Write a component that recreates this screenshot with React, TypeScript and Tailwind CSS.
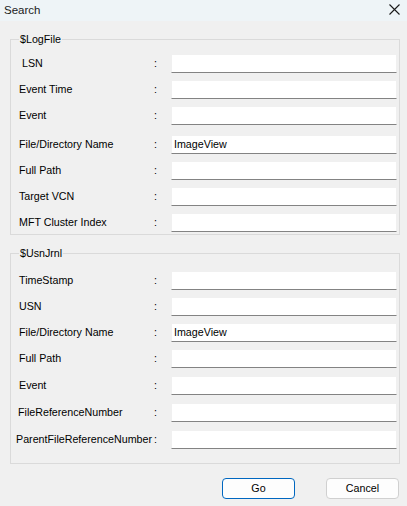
import React from "react";

type Row = { label: string; value?: string; mt: string; labelCls?: string };

const logFileRows: Row[] = [
  { label: "LSN", mt: "mt-0", labelCls: "w-[135px] pl-[3px]" },
  { label: "Event Time", mt: "mt-[7px]" },
  { label: "Event", mt: "mt-[7px]" },
  { label: "File/Directory Name", value: "ImageView", mt: "mt-[10px]" },
  { label: "Full Path", mt: "mt-[7px]" },
  { label: "Target VCN", mt: "mt-[7px]" },
  { label: "MFT Cluster Index", mt: "mt-[7px]" },
];

const usnRows: Row[] = [
  { label: "TimeStamp", mt: "mt-0" },
  { label: "USN", mt: "mt-[7px]" },
  { label: "File/Directory Name", value: "ImageView", mt: "mt-[7px]" },
  { label: "Full Path", mt: "mt-[7px]" },
  { label: "Event", mt: "mt-[8px]" },
  { label: "FileReferenceNumber", mt: "mt-[8px]", labelCls: "w-[136px] -ml-[1px]" },
  { label: "ParentFileReferenceNumber", mt: "mt-[8px]", labelCls: "w-[138px] -ml-[3px]" },
];

const FieldRow: React.FC<{ row: Row }> = ({ row }) => (
  <div className={`flex items-center h-[19px] ${row.mt}`}>
    <div className={`shrink-0 whitespace-nowrap text-[#000] ${row.labelCls ?? "w-[135px]"}`}>
      {row.label}
    </div>
    <div className="w-[17px] shrink-0 text-[#000]">:</div>
    <div className="flex-1 h-[19px] bg-white border border-[#f0f0f0] border-b-[#838383] flex items-center px-[2px] text-black">
      {row.value}
    </div>
  </div>
);

const GroupBox: React.FC<{ title: string; rows: Row[]; className: string; bodyCls: string }> = ({
  title,
  rows,
  className,
  bodyCls,
}) => (
  <fieldset className={`border border-[#dadada] ml-[10px] mr-[7px] pl-[8px] pr-[2px] min-w-0 ${className}`}>
    <legend className="px-[1px] text-black leading-[14px]">{title}</legend>
    <div className={bodyCls}>
      {rows.map((r) => (
        <FieldRow key={r.label} row={r} />
      ))}
    </div>
  </fieldset>
);

export default function App() {
  return (
    <div
      className="w-[407px] h-[506px] bg-[#f0f0f0] text-[10.7px] text-black overflow-hidden"
      style={{ fontFamily: '"Liberation Sans", Arial, sans-serif' }}
    >
      {/* title bar */}
      <div className="h-[21px] bg-[#eef4f7] flex items-center justify-between pl-[4px] pr-[7px]">
        <span className="text-[11.5px] text-[#1b1b1b] leading-none">Search</span>
        <svg width="11" height="11" viewBox="0 0 11 11" className="mt-[-2px]">
          <path d="M0.5 0.5 L10.5 10.5 M10.5 0.5 L0.5 10.5" stroke="#1a1a1a" strokeWidth="1.1" />
        </svg>
      </div>

      <div className="pt-[11px]">
        <GroupBox title="$LogFile" rows={logFileRows} className="h-[203px]" bodyCls="pt-[8px]" />
        <GroupBox title="$UsnJrnl" rows={usnRows} className="mt-[11px] h-[218px]" bodyCls="pt-[11px]" />
      </div>

      <div className="flex justify-end gap-[31px] pr-[8px] mt-[14px]">
        <button className="w-[73px] h-[21px] bg-[#fdfdfd] border border-[#0067c0] rounded-[4px] text-black">
          Go
        </button>
        <button className="w-[73px] h-[21px] bg-[#fdfdfd] border border-[#d0d0d0] rounded-[4px] text-black">
          Cancel
        </button>
      </div>
    </div>
  );
}
